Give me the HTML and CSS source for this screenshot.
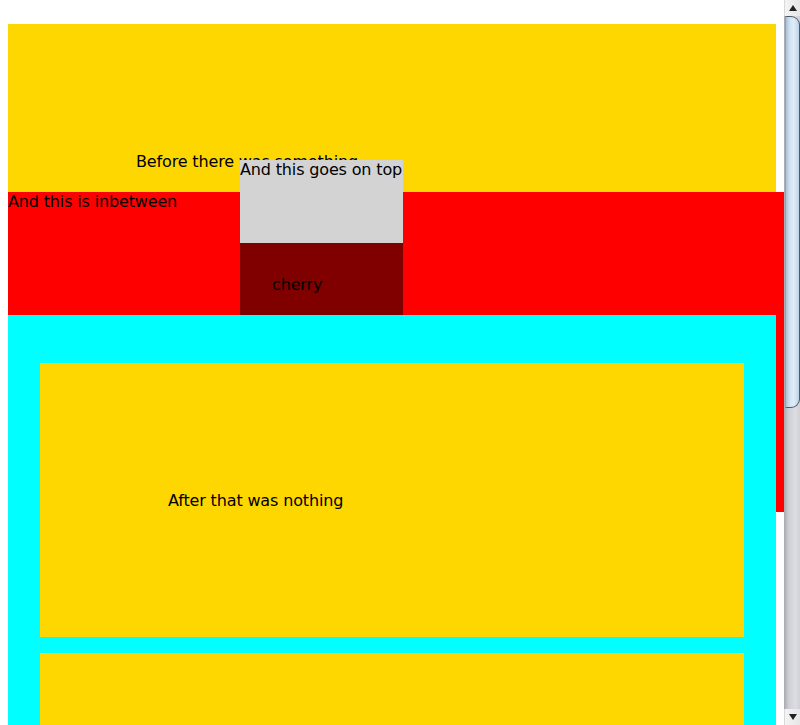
FILE: index.html
```html
<!DOCTYPE html>
<html>
<head>
<meta charset="utf-8">
<link rel="stylesheet" href="styles.css">
</head>
<body>
<div class="page">
  <div class="block before">Before there was something</div>
  <div class="between">And this is inbetween</div>
  <div class="after">
    <div class="block inner">After that was nothing</div>
    <div class="block inner"></div>
  </div>
  <div class="top">And this goes on top</div>
  <div class="cherry">cherry</div>
</div>
<div class="scrollbar">
  <div class="sb-btn up"><span class="tri-up"></span></div>
  <div class="sb-track">
    <div class="sb-thumb"></div>
  </div>
  <div class="sb-btn down"><span class="tri-down"></span></div>
</div>
</body>
</html>
```

FILE: styles.css
```css
html {
  overflow: hidden;
  background: #fff;
}
body {
  margin: 8px;
  font-family: "DejaVu Sans", sans-serif;
  font-size: 16px;
  letter-spacing: -0.15px;
  color: #000;
}
.page {
  position: relative;
  width: 768px;
  padding-top: 16px;
}
.block {
  background: #ffd700;
  padding: 128px 0 0 128px;
  box-sizing: border-box;
}
.before {
  height: 168px;
}
.between {
  position: relative;
  background: #f00;
  width: 776px;
  height: 320px;
  margin-bottom: -197px;
}
.after {
  position: relative;
  background: #0ff;
  padding: 48px 32px 0;
  display: flex;
  flex-direction: column;
  gap: 16px;
  height: 600px;
}
.inner {
  flex: none;
  height: 274px;
}
.top {
  position: absolute;
  left: 232px;
  top: 152px;
  width: 163px;
  height: 83px;
  background: #d3d3d3;
  white-space: nowrap;
}
.cherry {
  position: absolute;
  left: 232px;
  top: 235px;
  width: 163px;
  height: 72px;
  box-sizing: border-box;
  padding: 32px 0 0 32px;
  background: #800000;
}
.scrollbar {
  position: fixed;
  top: 0;
  right: 0;
  width: 16px;
  height: 725px;
  display: flex;
  flex-direction: column;
  background: #fff;
}
.sb-btn {
  height: 16px;
  flex: none;
  background: linear-gradient(to right, #f4f4f4, #e6e6e6);
  border-left: 1px solid #d8d8d8;
  box-sizing: border-box;
  display: flex;
  align-items: center;
  justify-content: center;
}
.tri-up {
  width: 0;
  height: 0;
  border-left: 4px solid transparent;
  border-right: 4px solid transparent;
  border-bottom: 6px solid #222;
}
.tri-down {
  width: 0;
  height: 0;
  border-left: 4px solid transparent;
  border-right: 4px solid transparent;
  border-top: 6px solid #222;
}
.sb-track {
  flex: 1;
  background: linear-gradient(to right, #a8a8ae, #cfcfd6 30%, #dcdce2 70%, #d0d0d6);
  position: relative;
}
.sb-thumb {
  height: 392px;
  margin-left: 1px;
  box-sizing: border-box;
  border: 1px solid #4d5a66;
  border-radius: 0 9px 9px 0 / 0 9px 9px 0;
  border-left-color: #8fa3b5;
  background: linear-gradient(to right, #a7c1da, #d2e3f2 30%, #e0ecf7 60%, #bcd2e7);
}
```
